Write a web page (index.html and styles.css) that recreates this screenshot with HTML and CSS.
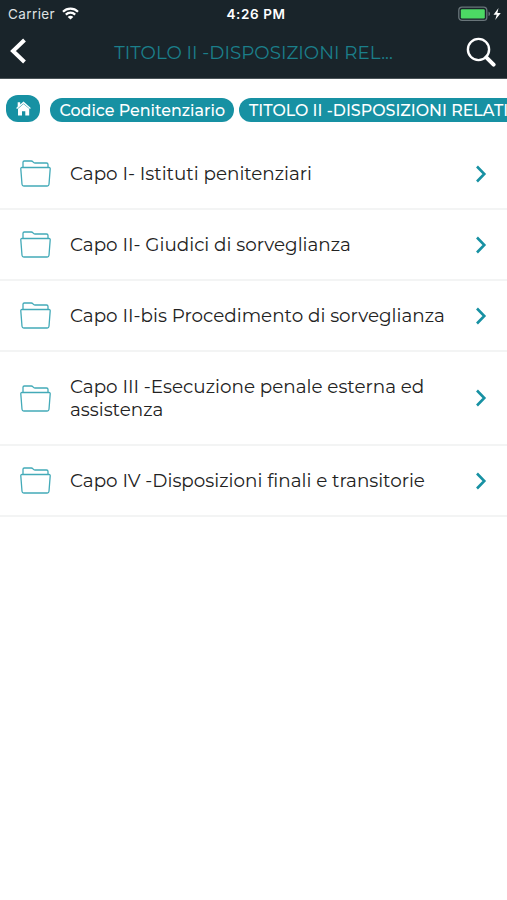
FILE: index.html
```html
<!DOCTYPE html>
<html lang="it">
<head>
  <meta charset="UTF-8">
  <title>Codice Penitenziario</title>
  <link rel="stylesheet" href="styles.css">
</head>
<body>
  <!-- shared icons -->
  <svg class="sprite" width="0" height="0">
    <symbol id="folder" viewBox="0 0 31 27">
      <path d="M3 7.500V2.300C3 1.400 3.400 1 4.300 1h7c.8 0 1.200.3 1.700.9.6.8 1.100 1.100 2 1.100h11.500c1.100 0 1.500.4 1.500 1.400v3.100M2 7.500h27c.9 0 1.300.5 1.200 1.400l-1.200 15.300c-.1 1.200-.7 1.800-1.800 1.800H3.800c-1.100 0-1.700-.6-1.800-1.800L.8 8.900C.7 8 1.100 7.500 2 7.500z"/>
    </symbol>
    <symbol id="chevron" viewBox="0 0 12 18">
      <path d="M2 1.500L9.300 9 2 16.500"/>
    </symbol>
  </svg>

  <header class="header">
    <div class="status-bar">
      <div class="carrier">
        <span>Carrier</span>
        <svg width="17" height="13" viewBox="0 0 17 13" fill="none" stroke="#fff" stroke-width="2.200">
          <path d="M1 4.700c4.200-4.200 10.800-4.200 15 0M3.800 7.600c2.700-2.600 6.700-2.600 9.400 0"/>
          <path d="M8.500 12.600L5.700 9.900c1.600-1.500 4-1.500 5.600 0z" fill="#fff" stroke="none"/>
        </svg>
      </div>
      <span class="time">4:26 PM</span>
      <svg class="battery" width="44" height="16" viewBox="0 0 44 16">
        <rect x=".8" y="1.200" width="28" height="13.200" rx="3.200" fill="none" stroke="#69757a" stroke-width="1.300"/>
        <rect x="2.800" y="3.200" width="24" height="9.200" rx="1.200" fill="#4cd964"/>
        <path d="M30.500 5.500c2 .8 2 3.800 0 4.600z" fill="#69757a"/>
        <path d="M40.500 2L35.500 8.700h3.200L37.200 14l5.600-7h-3.400z" fill="#fff"/>
      </svg>
    </div>
    <nav class="nav-bar">
      <svg class="back" width="18" height="28" viewBox="0 0 18 28">
        <path d="M15.500 2L4 13l11.500 11"/>
      </svg>
      <h1 class="title">TITOLO II -DISPOSIZIONI REL...</h1>
      <svg class="search" width="30" height="30" viewBox="0 0 30 30">
        <circle cx="12.500" cy="12.500" r="10.600" stroke-width="2.400"/>
        <path d="M20.300 20.300l7.300 7.300" stroke-width="4"/>
      </svg>
    </nav>
  </header>

  <div class="breadcrumb">
    <a class="home">
      <svg width="15" height="15" viewBox="0 0 15 15" fill="#fff">
        <path d="M7.500.5L14.800 7l-.8 1L7.500 2.400 1 8 .2 7l1.500-1.400V1.200h2.500v2.200z"/>
        <path d="M7.500 3l5.700 4.800v6.700H9.300v-4.200H6v4.200H2V7.800z"/>
      </svg>
    </a>
    <a class="crumb">Codice Penitenziario</a>
    <a class="crumb">TITOLO II -DISPOSIZIONI RELATIVE</a>
  </div>

  <ul class="list">
    <li class="row">
      <svg class="folder"><use href="#folder"/></svg>
      <span class="label">Capo I- Istituti penitenziari</span>
      <svg class="chevron"><use href="#chevron"/></svg>
    </li>
    <li class="row">
      <svg class="folder"><use href="#folder"/></svg>
      <span class="label">Capo II- Giudici di sorveglianza</span>
      <svg class="chevron"><use href="#chevron"/></svg>
    </li>
    <li class="row">
      <svg class="folder"><use href="#folder"/></svg>
      <span class="label">Capo II-bis Procedimento di sorveglianza</span>
      <svg class="chevron"><use href="#chevron"/></svg>
    </li>
    <li class="row">
      <svg class="folder"><use href="#folder"/></svg>
      <span class="label">Capo III -Esecuzione penale esterna ed<br>assistenza</span>
      <svg class="chevron"><use href="#chevron"/></svg>
    </li>
    <li class="row">
      <svg class="folder"><use href="#folder"/></svg>
      <span class="label label-wide">Capo IV -Disposizioni finali e transitorie</span>
      <svg class="chevron"><use href="#chevron"/></svg>
    </li>
  </ul>
</body>
</html>
```

FILE: styles.css
```css
* {
  box-sizing: border-box;
}

body {
  margin: 0;
  min-height: 100vh;
  background-color: #fff;
  color: #222;
  font-family: Montserrat, Inter, sans-serif;
  overflow: hidden;
}

svg {
  display: block;
  flex-shrink: 0;
}

.sprite {
  display: none;
}

.header {
  height: 79px;
  background-color: #19242a;
  border-bottom: 1px solid #4a5357;
}

.status-bar {
  display: grid;
  grid-template-columns: 1fr auto 1fr;
  align-items: center;
  height: 27px;
  padding: 0 5px 0 8px;
  color: #fff;
  font-family: Inter, sans-serif;
  font-size: 13.5px;
}

.carrier {
  display: flex;
  align-items: center;
  gap: 7px;
  color: #dfe2e3;
  letter-spacing: 0.4px;
}

.time {
  padding-left: 2px;
  font-weight: 600;
  letter-spacing: 0.6px;
}

.battery {
  justify-self: end;
}

.nav-bar {
  display: flex;
  align-items: center;
  justify-content: space-between;
  height: 50px;
  padding: 0 11px 0 9px;
}

.back {
  fill: none;
  stroke: #fff;
  stroke-width: 4;
}

.title {
  margin: 0 0 0 14px;
  color: #1b7f8a;
  font-size: 18.3px;
  font-weight: 400;
  white-space: nowrap;
}

.search {
  fill: none;
  stroke: #fff;
  stroke-linecap: round;
}

.breadcrumb {
  display: flex;
  height: 60px;
  padding: 16px 0 0 6px;
  overflow: hidden;
}

.home {
  display: flex;
  flex-shrink: 0;
  align-items: center;
  justify-content: center;
  width: 34px;
  height: 27px;
  margin-right: 10px;
  border-radius: 12px;
  background-color: #1791a3;
}

.crumb {
  flex-shrink: 0;
  height: 24px;
  margin: 3px 5px 0 0;
  padding: 0 9.5px;
  border-radius: 12px;
  background-color: #1791a3;
  color: #fff;
  font-size: 15.9px;
  font-weight: 500;
  line-height: 25px;
  white-space: nowrap;
}

.list {
  margin: 0;
  padding: 0;
  list-style: none;
}

.row {
  display: flex;
  align-items: center;
  min-height: 71px;
  padding: 20px;
  border-bottom: 2px solid #f3f4f4;
}

.folder {
  width: 31px;
  height: 27px;
  margin-right: 19px;
  fill: none;
  stroke: #43aab8;
  stroke-width: 1.3;
}

.label {
  flex: 1;
  padding: 3px 0;
  font-size: 18.35px;
  line-height: 23px;
  white-space: nowrap;
}

/* keeps the "fi" pair as two letters */
.label-wide {
  font-variant-ligatures: none;
}

.chevron {
  width: 12px;
  height: 18px;
  fill: none;
  stroke: #1791a3;
  stroke-width: 2.6;
}
```
